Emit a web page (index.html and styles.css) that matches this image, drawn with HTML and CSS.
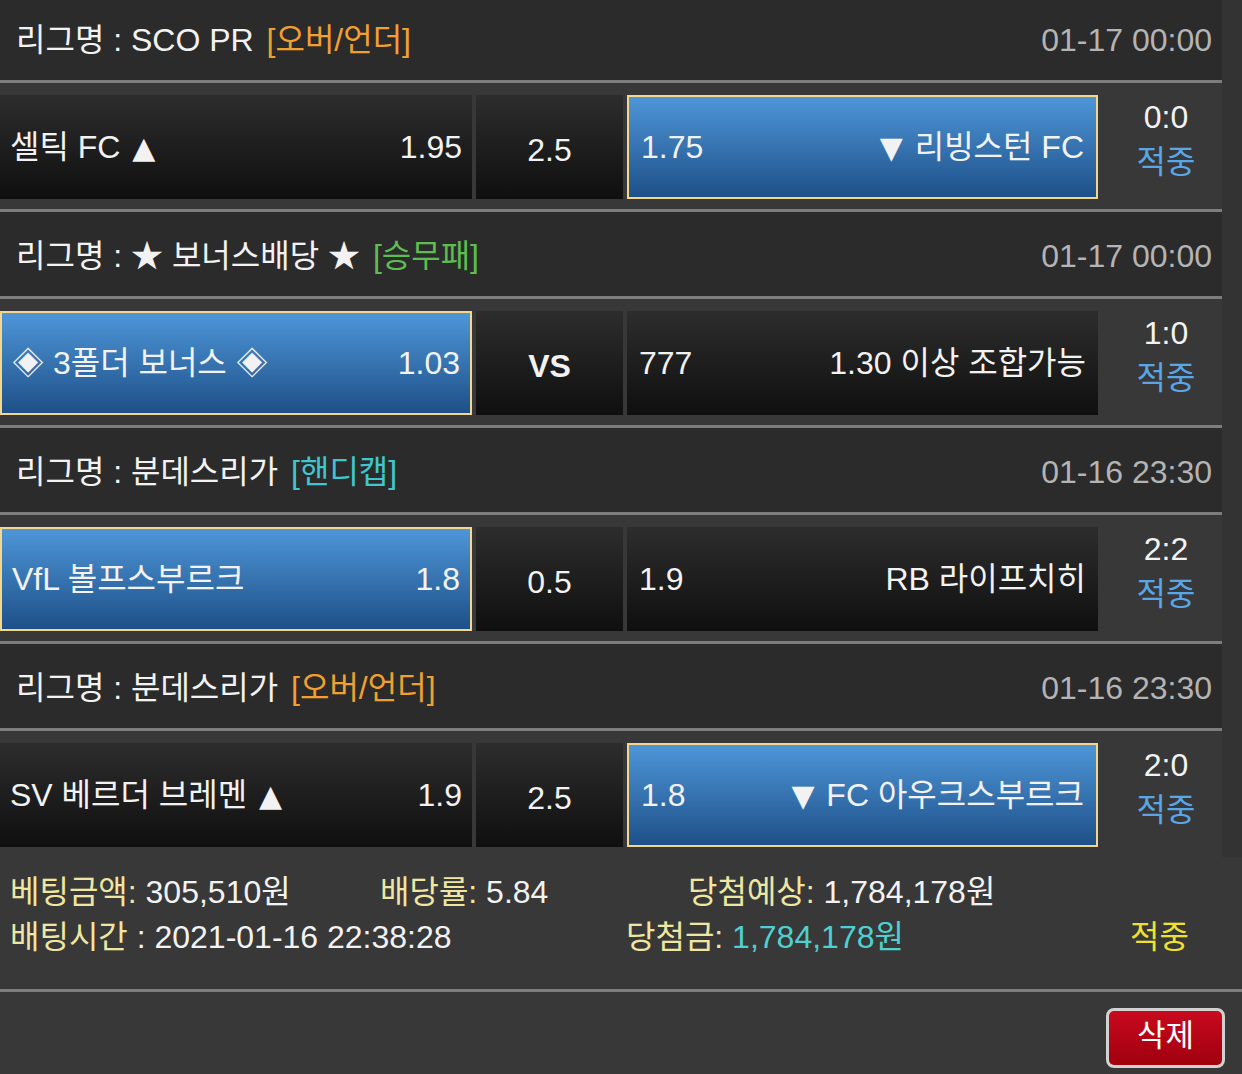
FILE: index.html
```html
<html lang="ko"><head>
    <meta charset="UTF-8">
    <meta name="viewport" content="width=device-width, initial-scale=1.0">
    <title>배팅내역</title>
    <link rel="stylesheet" href="styles.css">
</head>
<body>
    <div class="bet-list">
        <!-- 1 -->
        <div class="league">
            <div class="league-name">리그명 : SCO PR <span class="tag orange">[오버/언더]</span></div>
            <div class="league-date">01-17 00:00</div>
        </div>
        <div class="match">
            <div class="cell home"><span>셀틱 FC <span class="tri">▲</span></span><span>1.95</span></div>
            <div class="cell mid">2.5</div>
            <div class="cell away picked"><span>1.75</span><span><span class="tri">▼</span> 리빙스턴 FC</span></div>
            <div class="score">0:0<br><span class="hit">적중</span></div>
        </div>

        <!-- 2 -->
        <div class="league">
            <div class="league-name">리그명 : ★ 보너스배당 ★ <span class="tag green">[승무패]</span></div>
            <div class="league-date">01-17 00:00</div>
        </div>
        <div class="match">
            <div class="cell home picked"><span>◈ 3폴더 보너스 ◈</span><span>1.03</span></div>
            <div class="cell mid vs">VS</div>
            <div class="cell away"><span>777</span><span>1.30 이상 조합가능</span></div>
            <div class="score">1:0<br><span class="hit">적중</span></div>
        </div>

        <!-- 3 -->
        <div class="league">
            <div class="league-name">리그명 : 분데스리가 <span class="tag cyan">[핸디캡]</span></div>
            <div class="league-date">01-16 23:30</div>
        </div>
        <div class="match">
            <div class="cell home picked"><span>VfL 볼프스부르크</span><span>1.8</span></div>
            <div class="cell mid">0.5</div>
            <div class="cell away"><span>1.9</span><span>RB 라이프치히</span></div>
            <div class="score">2:2<br><span class="hit">적중</span></div>
        </div>

        <!-- 4 -->
        <div class="league">
            <div class="league-name">리그명 : 분데스리가 <span class="tag orange">[오버/언더]</span></div>
            <div class="league-date">01-16 23:30</div>
        </div>
        <div class="match last">
            <div class="cell home"><span>SV 베르더 브레멘 <span class="tri">▲</span></span><span>1.9</span></div>
            <div class="cell mid">2.5</div>
            <div class="cell away picked"><span>1.8</span><span><span class="tri">▼</span> FC 아우크스부르크</span></div>
            <div class="score">2:0<br><span class="hit">적중</span></div>
        </div>
    </div>

    <div class="summary">
        <div class="sum-line first">
            <div><span class="lbl">베팅금액:</span> 305,510원</div>
            <div><span class="lbl">배당률:</span> 5.84</div>
            <div><span class="lbl">당첨예상:</span> 1,784,178원</div>
        </div>
        <div class="sum-line second">
            <div><span class="lbl">배팅시간</span> : 2021-01-16 22:38:28</div>
            <div><span class="lbl">당첨금:</span> <span class="win">1,784,178원</span></div>
            <div class="result">적중</div>
        </div>
    </div>

    <div class="footer">
        <button class="del-btn">삭제</button>
    </div>
</body></html>
```

FILE: styles.css
```css
body {
    margin: 0;
    background-color: #333333;
    font-family: "Liberation Sans", "Noto Sans CJK KR", sans-serif;
    font-size: 32px;
    color: #f2f2f2;
    overflow: hidden;
}
.bet-list {
    width: 1222px;
    margin-top: -4px;
}
.league {
    height: 87px;
    padding: 4px 10px 0 16px;
    box-sizing: border-box;
    display: flex;
    align-items: center;
    justify-content: space-between;
    background-color: #2b2b2b;
    border-bottom: 3px solid #7d7d7d;
    line-height: 40px;
}
.league-date {
    color: #b4b4b4;
}
.tag {
    margin-left: 4px;
}
.orange { color: #f0a030; }
.green { color: #5dbd4f; }
.cyan { color: #3fc6cf; }
.match {
    display: flex;
    gap: 4px;
    padding: 12px 0 10px;
    background-color: #383838;
    border-bottom: 3px solid #7d7d7d;
}
.match.last {
    border-bottom: none;
}
.cell {
    height: 104px;
    box-sizing: border-box;
    display: flex;
    align-items: center;
    justify-content: space-between;
    background: linear-gradient(#2d2d2d, #0f0f0f);
    white-space: nowrap;
    line-height: 36px;
}
.tri {
    font-family: "DejaVu Sans", sans-serif;
    font-size: 30px;
    margin: 0 3px;
}
.home {
    width: 472px;
    padding: 0 10px 0 10px;
}
.mid {
    width: 147px;
    justify-content: center;
    padding-top: 6px;
}
.vs {
    font-weight: bold;
}
.away {
    width: 471px;
    padding: 0 12px 0 12px;
}
.cell.picked {
    background: linear-gradient(#4e96d8, #1e5088);
    border: 2px solid #f3d78c;
}
.score {
    flex: 1;
    padding-left: 8px;
    text-align: center;
    line-height: 45px;
}
.hit {
    color: #58a6e6;
}
.summary {
    padding: 13px 0 29px 10px;
    background-color: #383838;
    border-bottom: 3px solid #7d7d7d;
    line-height: 45px;
}
.sum-line {
    display: grid;
}
.sum-line.first {
    grid-template-columns: 370px 308px auto;
}
.sum-line.second {
    grid-template-columns: 616px 504px auto;
}
.lbl {
    color: #efe6a2;
}
.win {
    color: #4fd0d0;
}
.result {
    color: #f0e030;
}
.footer {
    display: flex;
    justify-content: flex-end;
    padding: 16px 17px 0 0;
    height: 82px;
    box-sizing: border-box;
    background-color: #383838;
}
.del-btn {
    width: 119px;
    height: 60px;
    font-family: inherit;
    font-size: 31px;
    line-height: 36px;
    color: #fff;
    background: linear-gradient(#c80a1e, #a0000f);
    border: 3px solid #d2d2d2;
    border-radius: 8px;
    padding: 0 0 4px;
}
```
